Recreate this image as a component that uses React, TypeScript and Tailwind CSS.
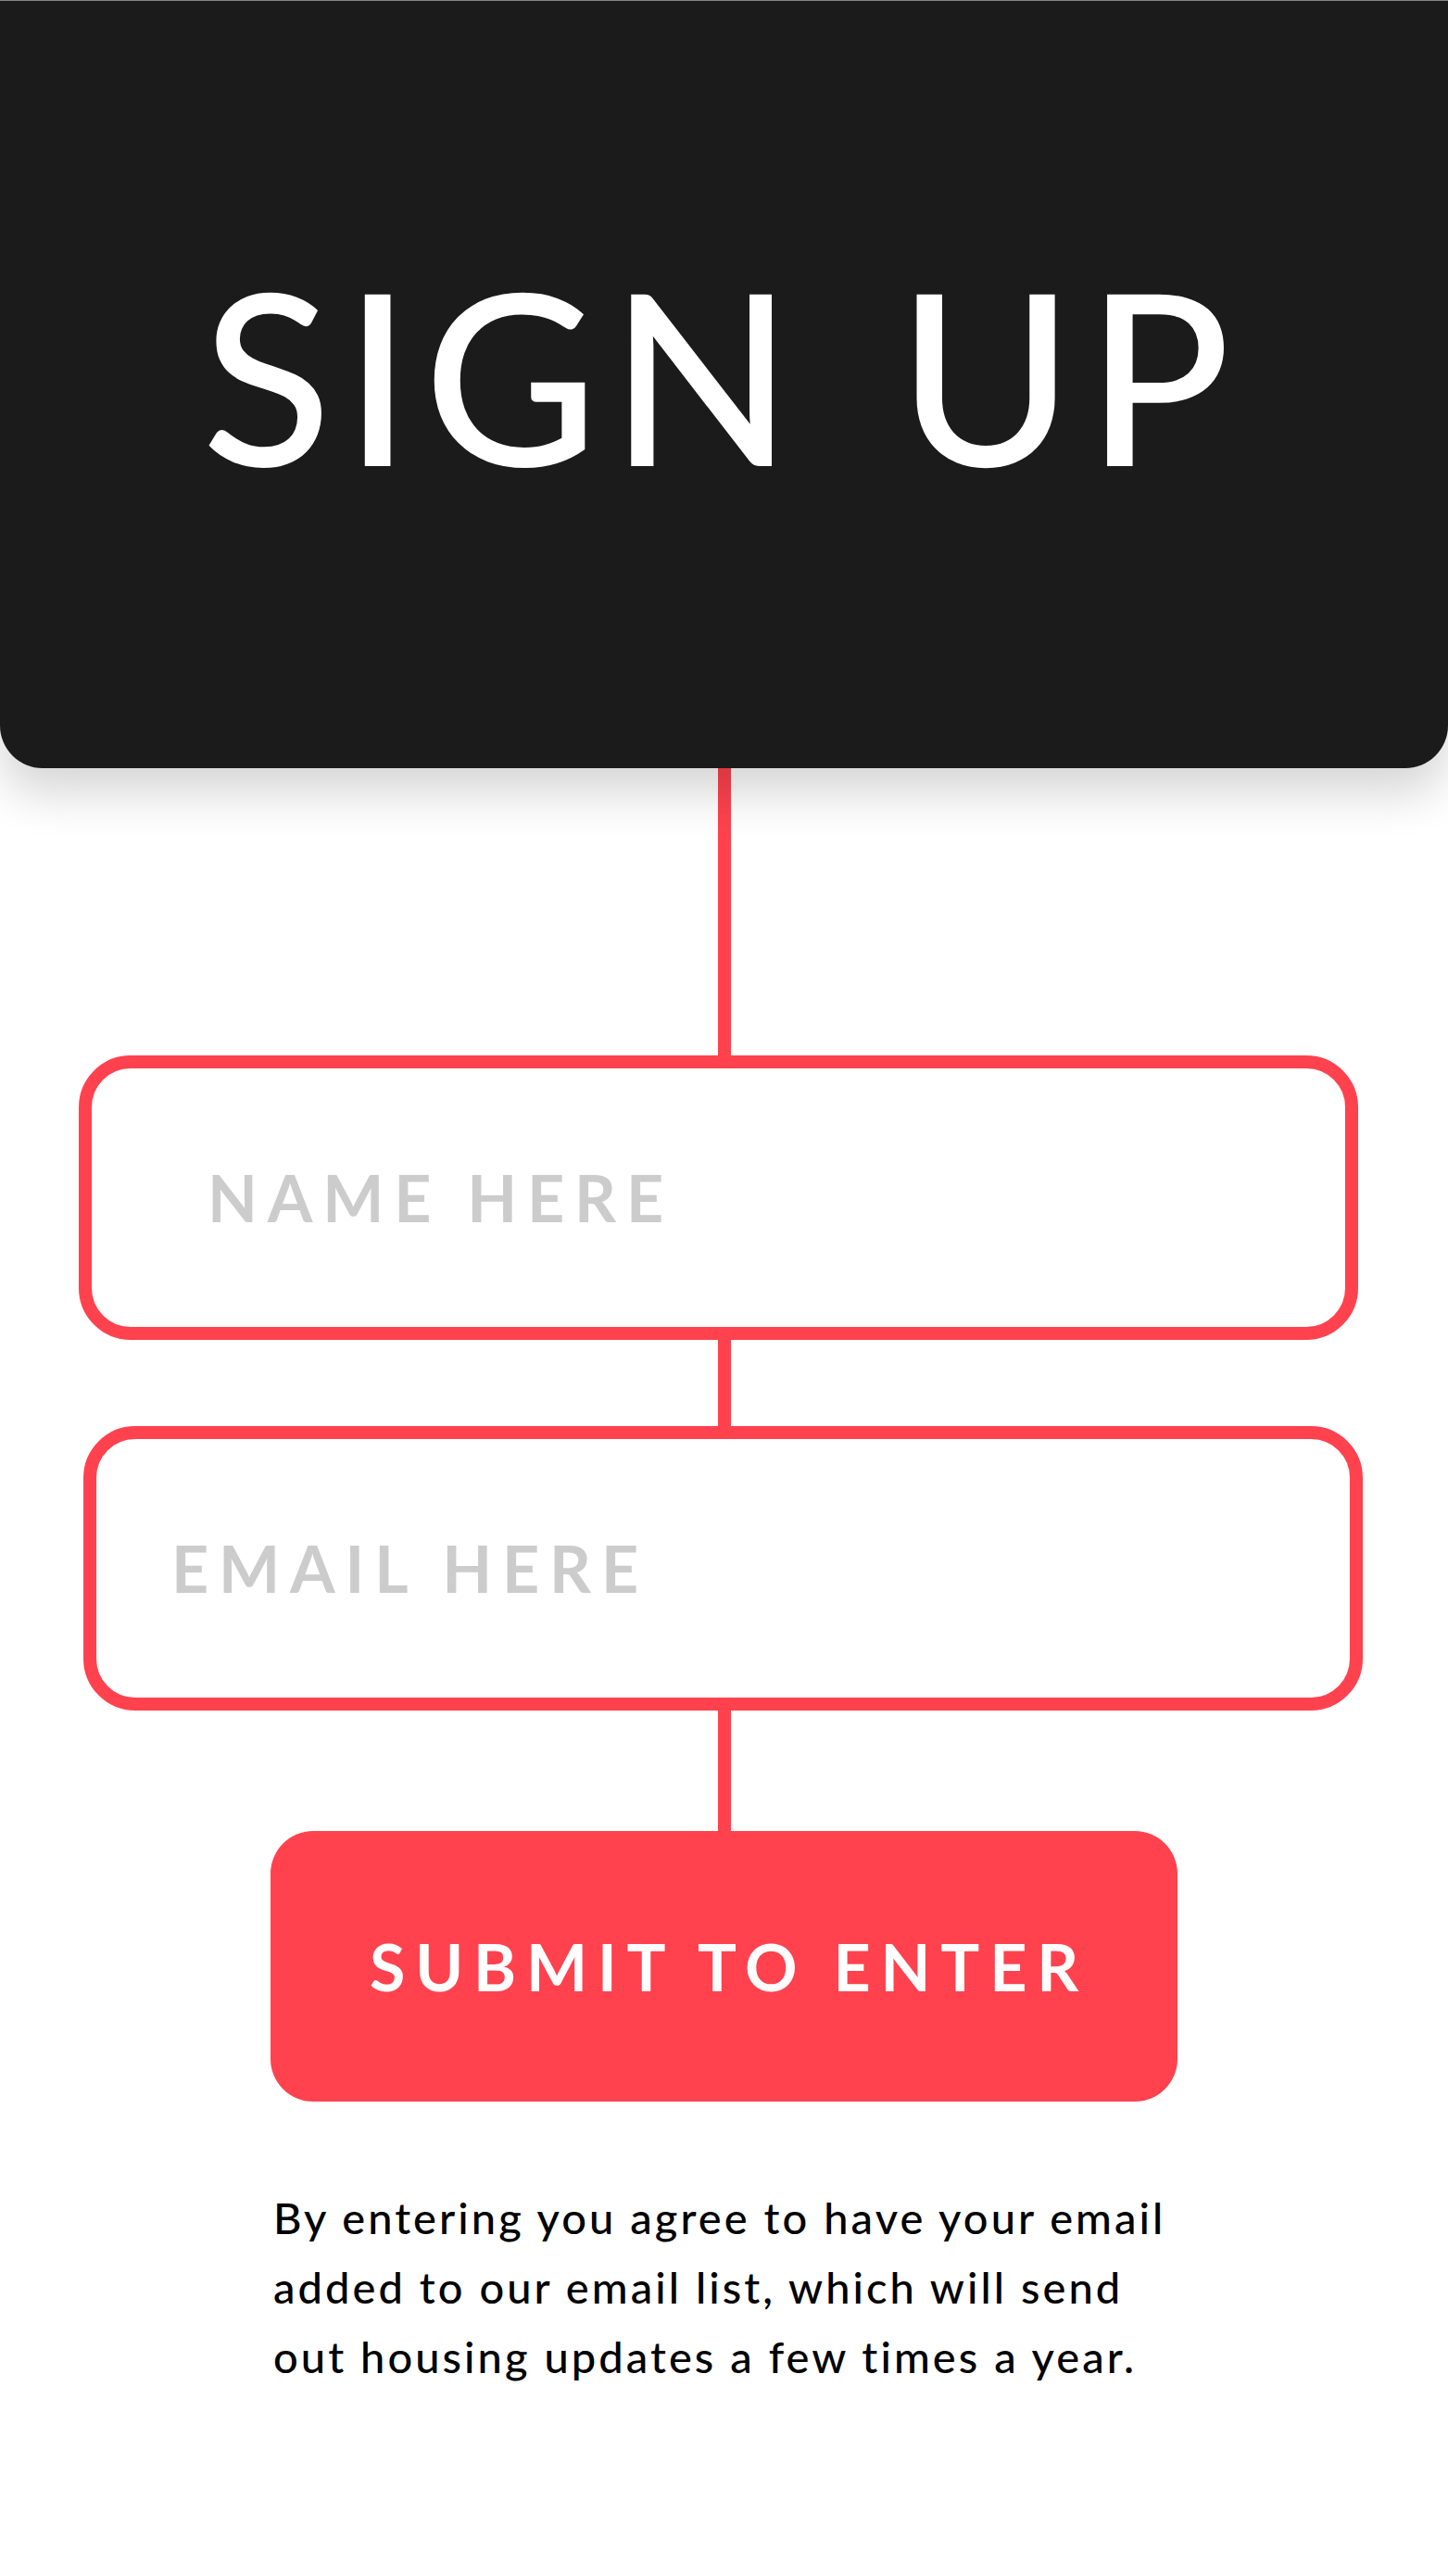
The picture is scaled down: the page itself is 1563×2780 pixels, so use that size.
import React from "react";

const RED = "bg-[#ff424e]";

function Connector({ h }: { h: string }) {
  return <div className={`mx-auto w-[14px] ${RED} ${h}`} />;
}

export default function App() {
  return (
    <div className="min-h-[2780px] w-full bg-white font-['Lato',sans-serif]">
      {/* ── Header ── */}
      <header className="relative z-10 flex h-[829px] w-full items-center justify-center rounded-b-[46px] border-t border-[#858585] bg-[#1b1b1b] pb-[24px] shadow-[0_28px_50px_rgba(0,0,0,0.16)]">
        <h1 className="flex gap-[100px] pr-[4px] text-[258px] font-medium leading-none tracking-[13px] text-white">
          <span>SIGN</span>
          <span>UP</span>
        </h1>
      </header>

      <Connector h="h-[310px]" />

      {/* ── Name field ── */}
      <div className="ml-[85px] flex h-[307px] w-[1381px] items-center rounded-[56px] border-[14px] border-[#ff424e] pl-[125px]">
        <input
          placeholder="NAME HERE"
          className="w-full bg-transparent text-[70px] font-bold tracking-[0.155em] text-[#cccccc] outline-none placeholder:text-[#cccccc]"
        />
      </div>

      <Connector h="h-[93px]" />

      {/* ── Email field ── */}
      <div className="ml-[90px] flex h-[307px] w-[1381px] items-center rounded-[56px] border-[14px] border-[#ff424e] pl-[81px]">
        <input
          placeholder="EMAIL HERE"
          className="w-full bg-transparent text-[70px] font-bold tracking-[0.155em] text-[#cccccc] outline-none placeholder:text-[#cccccc]"
        />
      </div>

      <Connector h="h-[130px]" />

      {/* ── Submit ── */}
      <button className="mx-auto flex h-[292px] w-[979px] items-center justify-center rounded-[46px] bg-[#ff424e] pl-[11px] text-[70px] font-bold tracking-[0.155em] text-white">
        SUBMIT TO ENTER
      </button>

      <p className="mx-auto mt-[88px] w-[979px] pl-[3px] text-[47px] font-medium leading-[75px] tracking-[0.065em] text-black">
        By entering you agree to have your email
        <br />
        added to our email list, which will send
        <br />
        out housing updates a few times a year.
      </p>
    </div>
  );
}
